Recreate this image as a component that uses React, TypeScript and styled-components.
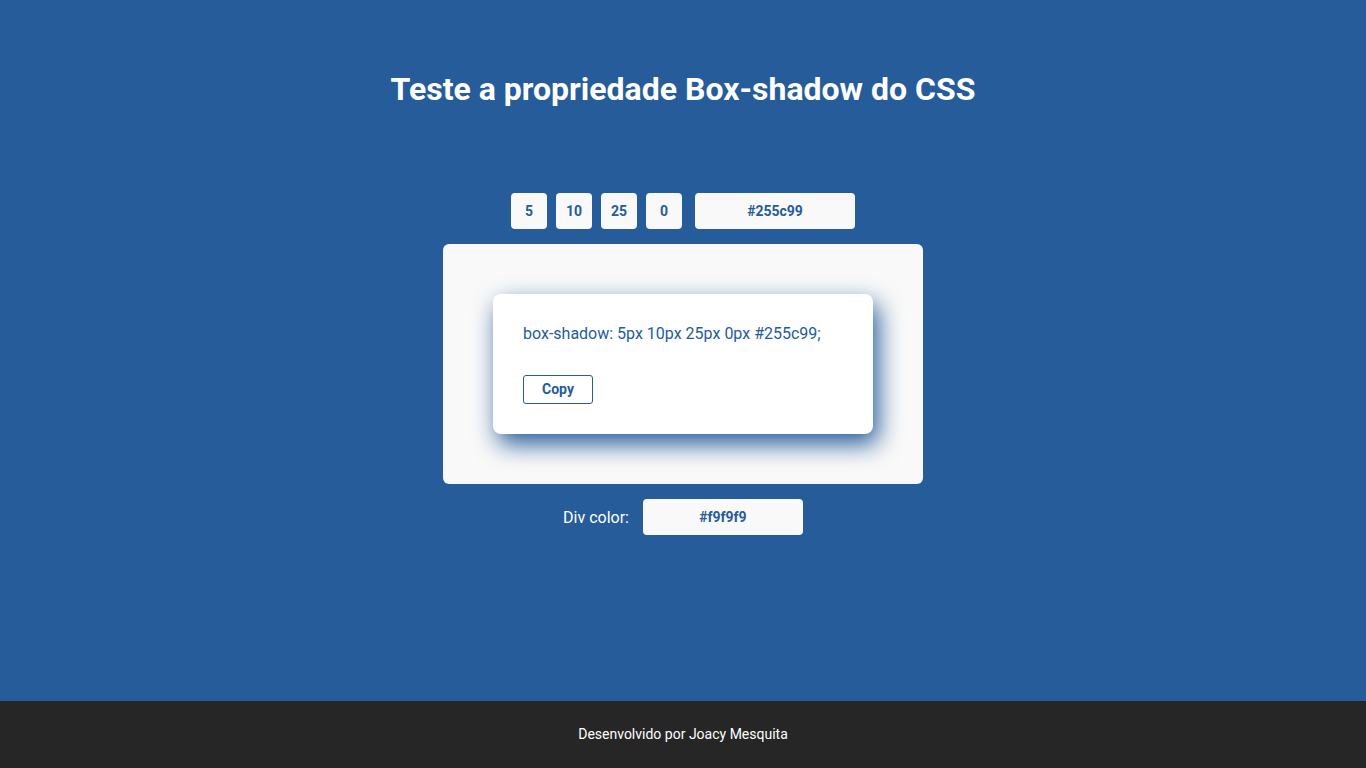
import { useState } from "react";
import styled, { createGlobalStyle } from "styled-components";

const GlobalStyle = createGlobalStyle`
  * {
    box-sizing: border-box;
  }
  body {
    margin: 0;
    font-family: Roboto, "Liberation Sans", sans-serif;
    background: #255c99;
  }
`;

const Page = styled.div`
  display: flex;
  flex-direction: column;
  min-height: 100vh;
`;

const Main = styled.main`
  flex: 1;
  display: flex;
  flex-direction: column;
  align-items: center;
  padding-top: 70px;
`;

const Title = styled.h1`
  margin: 0;
  color: #fff;
  font-size: 32px;
  line-height: 38px;
  font-weight: 700;
`;

const Controls = styled.div`
  display: flex;
  gap: 9px;
  margin-top: 85px;

  & > input:last-child {
    margin-left: 4px;
  }
`;

const Field = styled.input<{ $wide?: boolean }>`
  width: ${(p) => (p.$wide ? "160px" : "36px")};
  height: 36px;
  border: none;
  border-radius: 4px;
  background: #f9f9f9;
  color: #255c99;
  font-family: Roboto, "Liberation Sans", sans-serif;
  font-size: 14px;
  font-weight: 700;
  text-align: center;
  padding: 0;
  outline: none;
`;

const Stage = styled.div<{ $bg: string }>`
  margin-top: 15px;
  width: 480px;
  height: 240px;
  border-radius: 6px;
  background: ${(p) => p.$bg};
  display: flex;
  align-items: center;
  justify-content: center;
`;

const Card = styled.div<{ $shadow: string }>`
  width: 380px;
  height: 140px;
  padding: 30px;
  background: #fff;
  border-radius: 8px;
  box-shadow: ${(p) => p.$shadow};
  display: flex;
  flex-direction: column;
  align-items: flex-start;
`;

const Code = styled.p`
  margin: 0;
  color: #255c99;
  font-size: 16px;
  line-height: 19px;
`;

const CopyButton = styled.button`
  margin-top: 32px;
  width: 70px;
  height: 29px;
  padding: 0 0 1px;
  border: 1px solid #255c99;
  border-radius: 3px;
  background: #fff;
  color: #255c99;
  font-family: Roboto, "Liberation Sans", sans-serif;
  font-size: 14px;
  font-weight: 700;
  cursor: pointer;
`;

const DivColorRow = styled.div`
  margin-top: 15px;
  display: flex;
  align-items: center;
  gap: 14px;
`;

const Label = styled.label`
  color: #fff;
  font-size: 16px;
`;

const Footer = styled.footer`
  height: 67px;
  padding-bottom: 1px;
  background: #262626;
  color: #fff;
  font-size: 14px;
  display: flex;
  align-items: center;
  justify-content: center;
`;

export default function App() {
  const [h, setH] = useState("5");
  const [v, setV] = useState("10");
  const [blur, setBlur] = useState("25");
  const [spread, setSpread] = useState("0");
  const [color, setColor] = useState("#255c99");
  const [divColor, setDivColor] = useState("#f9f9f9");

  const shadow = `${h}px ${v}px ${blur}px ${spread}px ${color}`;

  const onCopy = () => {
    navigator.clipboard?.writeText(`box-shadow: ${shadow};`).catch(() => {});
  };

  return (
    <Page>
      <GlobalStyle />
      <Main>
        <Title>Teste a propriedade Box-shadow do CSS</Title>
        <Controls>
          <Field value={h} onChange={(e) => setH(e.target.value)} />
          <Field value={v} onChange={(e) => setV(e.target.value)} />
          <Field value={blur} onChange={(e) => setBlur(e.target.value)} />
          <Field value={spread} onChange={(e) => setSpread(e.target.value)} />
          <Field $wide value={color} onChange={(e) => setColor(e.target.value)} />
        </Controls>
        <Stage $bg={divColor}>
          <Card $shadow={shadow}>
            <Code>box-shadow: {shadow};</Code>
            <CopyButton onClick={onCopy}>Copy</CopyButton>
          </Card>
        </Stage>
        <DivColorRow>
          <Label htmlFor="div-color">Div color:</Label>
          <Field
            id="div-color"
            $wide
            value={divColor}
            onChange={(e) => setDivColor(e.target.value)}
          />
        </DivColorRow>
      </Main>
      <Footer>Desenvolvido por Joacy Mesquita</Footer>
    </Page>
  );
}
